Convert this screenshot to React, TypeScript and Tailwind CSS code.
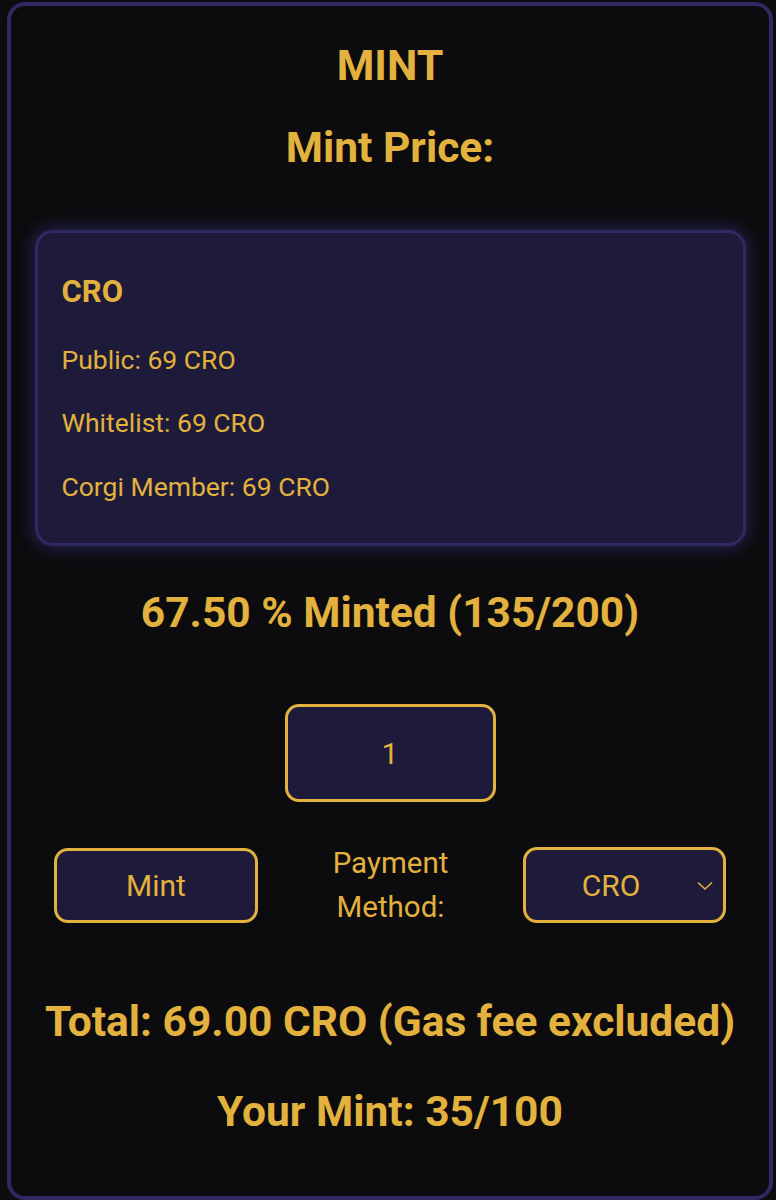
import React from "react";

export default function App() {
  const gold = "text-[#e2b13e]";
  return (
    <div className="min-h-[1200px] w-[776px] bg-[#0c0c0e] pl-[7px] pt-[2px] font-['Roboto',sans-serif]">
      <div className="flex h-[1198px] w-[766px] flex-col items-center rounded-[18px] border-[4px] border-[#2e2960] bg-[#0c0c0e]">
        <h1 className={`mt-[34px] text-[43px] font-bold leading-[50px] ${gold}`}>MINT</h1>
        <h2 className={`mt-[33px] text-[42.5px] font-bold leading-[50px] ${gold}`}>Mint Price:</h2>

        <div className="mt-[57px] flex h-[316px] w-[711px] flex-col rounded-[18px] border-[3px] border-[#2f2a62] bg-[#1e1b3a] pl-[24px] pt-[43px] shadow-[0_0_14px_4px_rgba(60,50,140,0.45)]">
          <div className={`text-[31px] font-bold leading-[32px] ${gold}`}>CRO</div>
          <div className={`mt-[36px] text-[26.5px] leading-[32px] ${gold}`}>Public: 69 CRO</div>
          <div className={`mt-[31px] text-[26.5px] leading-[32px] ${gold}`}>Whitelist: 69 CRO</div>
          <div className={`mt-[32px] text-[26.5px] leading-[32px] ${gold}`}>Corgi Member: 69 CRO</div>
        </div>

        <div className={`mt-[42px] text-[42.5px] font-bold leading-[50px] ${gold}`}>67.50 % Minted (135/200)</div>

        <div className={`mt-[66px] flex h-[98px] w-[211px] items-center justify-center rounded-[14px] border-[3px] border-[#e2b13e] bg-[#1e1b3a] text-[30px] ${gold}`}>
          1
        </div>

        <div className="mt-[39px] flex h-[88px] w-full items-center justify-between px-[43px]">
          <button className={`flex h-[75px] w-[204px] items-center justify-center rounded-[14px] border-[3px] border-[#e2b13e] bg-[#1e1b3a] text-[30px] ${gold}`}>
            Mint
          </button>
          <div className={`text-center text-[29.5px] leading-[44px] ${gold}`}>
            Payment
            <br />
            Method:
          </div>
          <div className={`relative flex h-[76px] w-[203px] items-center justify-center rounded-[14px] border-[3px] border-[#e2b13e] bg-[#1e1b3a] text-[30px] ${gold}`}>
            <span className="mr-[27px]">CRO</span>
            <svg className="absolute right-[10px] top-[31px]" width="16" height="10" viewBox="0 0 16 10" fill="none">
              <path d="M1 1.5 L8 8 L15 1.5" stroke="#e2b13e" strokeWidth="1.6" />
            </svg>
          </div>
        </div>

        <div className={`mt-[68px] text-[42.5px] font-bold leading-[50px] ${gold}`}>
          Total: 69.00 CRO (Gas fee excluded)
        </div>
        <div className={`mt-[40px] text-[42.5px] font-bold leading-[50px] ${gold}`}>Your Mint: 35/100</div>
      </div>
    </div>
  );
}
